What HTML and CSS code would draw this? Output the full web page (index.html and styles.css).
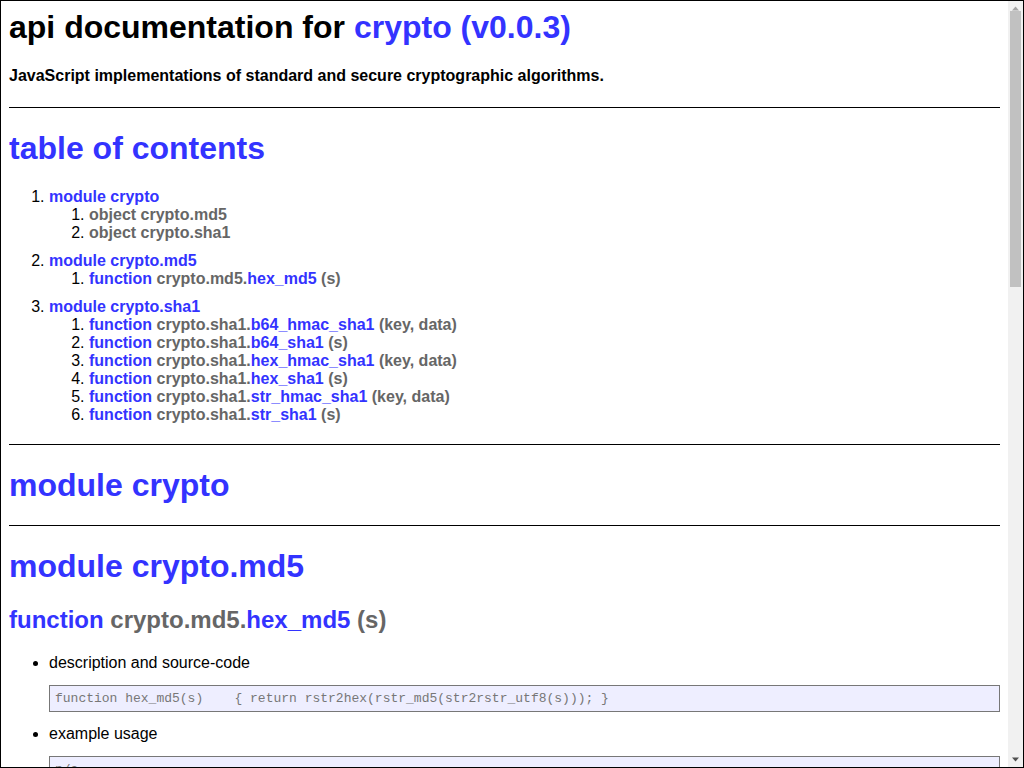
FILE: index.html
```html
<!DOCTYPE html>
<html lang="en">
<head>
<meta charset="utf-8">
<title>api documentation for crypto (v0.0.3)</title>
<link rel="stylesheet" href="styles.css">
</head>
<body>
<div class="frame">
  <div class="page">
    <h1 class="title">api documentation for <a href="#apidoc.tableOfContents">crypto (v0.0.3)</a></h1>
    <div class="desc">JavaScript implementations of standard and secure cryptographic algorithms.</div>

    <div class="section">
      <h1><a href="#apidoc.tableOfContents">table of contents</a></h1>
      <ol class="toc">
        <li class="module-li"><a href="#apidoc.module.crypto">module crypto</a>
          <ol>
            <li><span class="sig">object crypto.md5</span></li>
            <li><span class="sig">object crypto.sha1</span></li>
          </ol>
        </li>
        <li class="module-li"><a href="#apidoc.module.crypto.md5">module crypto.md5</a>
          <ol>
            <li><a href="#apidoc.element.crypto.md5.hex_md5">function <span class="sig">crypto.md5.</span>hex_md5 <span class="sig">(s)</span></a></li>
          </ol>
        </li>
        <li class="module-li"><a href="#apidoc.module.crypto.sha1">module crypto.sha1</a>
          <ol>
            <li><a href="#apidoc.element.crypto.sha1.b64_hmac_sha1">function <span class="sig">crypto.sha1.</span>b64_hmac_sha1 <span class="sig">(key, data)</span></a></li>
            <li><a href="#apidoc.element.crypto.sha1.b64_sha1">function <span class="sig">crypto.sha1.</span>b64_sha1 <span class="sig">(s)</span></a></li>
            <li><a href="#apidoc.element.crypto.sha1.hex_hmac_sha1">function <span class="sig">crypto.sha1.</span>hex_hmac_sha1 <span class="sig">(key, data)</span></a></li>
            <li><a href="#apidoc.element.crypto.sha1.hex_sha1">function <span class="sig">crypto.sha1.</span>hex_sha1 <span class="sig">(s)</span></a></li>
            <li><a href="#apidoc.element.crypto.sha1.str_hmac_sha1">function <span class="sig">crypto.sha1.</span>str_hmac_sha1 <span class="sig">(key, data)</span></a></li>
            <li><a href="#apidoc.element.crypto.sha1.str_sha1">function <span class="sig">crypto.sha1.</span>str_sha1 <span class="sig">(s)</span></a></li>
          </ol>
        </li>
      </ol>
    </div>

    <div class="section">
      <h1><a href="#apidoc.module.crypto">module crypto</a></h1>
    </div>

    <div class="section">
      <h1><a href="#apidoc.module.crypto.md5">module crypto.md5</a></h1>
      <div class="element">
        <h2><a href="#apidoc.element.crypto.md5.hex_md5">function <span class="sig">crypto.md5.</span>hex_md5 <span class="sig">(s)</span></a></h2>
        <ul>
          <li>description and source-code<pre class="code">function hex_md5(s)    { return rstr2hex(rstr_md5(str2rstr_utf8(s))); }</pre></li>
          <li>example usage<pre class="code">n/a</pre></li>
        </ul>
      </div>
    </div>
  </div>
  <div class="scrollbar" aria-hidden="true">
    <div class="sb-btn sb-up">
      <svg width="15" height="10" viewBox="0 0 15 10"><polygon points="4,9.5 11,9.5 7.5,5.5" fill="#a3a3a3"/></svg>
    </div>
    <div class="sb-thumb"></div>
    <div class="sb-fill"></div>
    <div class="sb-btn sb-down">
      <svg width="15" height="10" viewBox="0 0 15 10"><polygon points="4,0.5 11,0.5 7.5,4.5" fill="#505050"/></svg>
    </div>
  </div>
</div>
</body>
</html>
```

FILE: styles.css
```css
*,
*::before,
*::after {
  box-sizing: border-box;
}

html,
body {
  margin: 0;
  padding: 0;
  background: #fff;
}

body {
  font-family: "Liberation Sans", Arial, Helvetica, sans-serif;
  font-size: 16px;
  color: #000;
}

.frame {
  display: flex;
  height: 768px;
  border: 1px solid #000;
  overflow: hidden;
}

.page {
  flex: 1 1 auto;
  min-width: 0;
  padding: 8px 8px 0 8px;
  overflow: hidden;
}

.page a {
  color: #33f;
  font-weight: bold;
  text-decoration: none;
}

.title {
  margin-top: 0;
}

.desc {
  font-weight: bold;
  padding-bottom: 2px;
}

.section {
  border-top: 1px solid #000;
  margin-top: 20px;
}

.sig {
  color: #666;
  font-weight: bold;
}

.toc li.module-li {
  margin-top: 10px;
}

.code {
  background: #eef;
  border: 1px solid #777;
  color: #777;
  font-family: "Liberation Mono", "DejaVu Sans Mono", monospace;
  font-size: 13px;
  padding: 5px;
  overflow: hidden;
  white-space: pre-wrap;
}

.scrollbar {
  flex: 0 0 15px;
  width: 15px;
  display: flex;
  flex-direction: column;
  background: #f1f1f1;
}

.sb-btn {
  height: 10px;
  flex: 0 0 10px;
}

.sb-btn svg {
  display: block;
}

.sb-thumb {
  flex: 0 0 276px;
  margin: 0 2px;
  background: #c1c1c1;
}

.sb-fill {
  flex: 1 1 auto;
}
```
